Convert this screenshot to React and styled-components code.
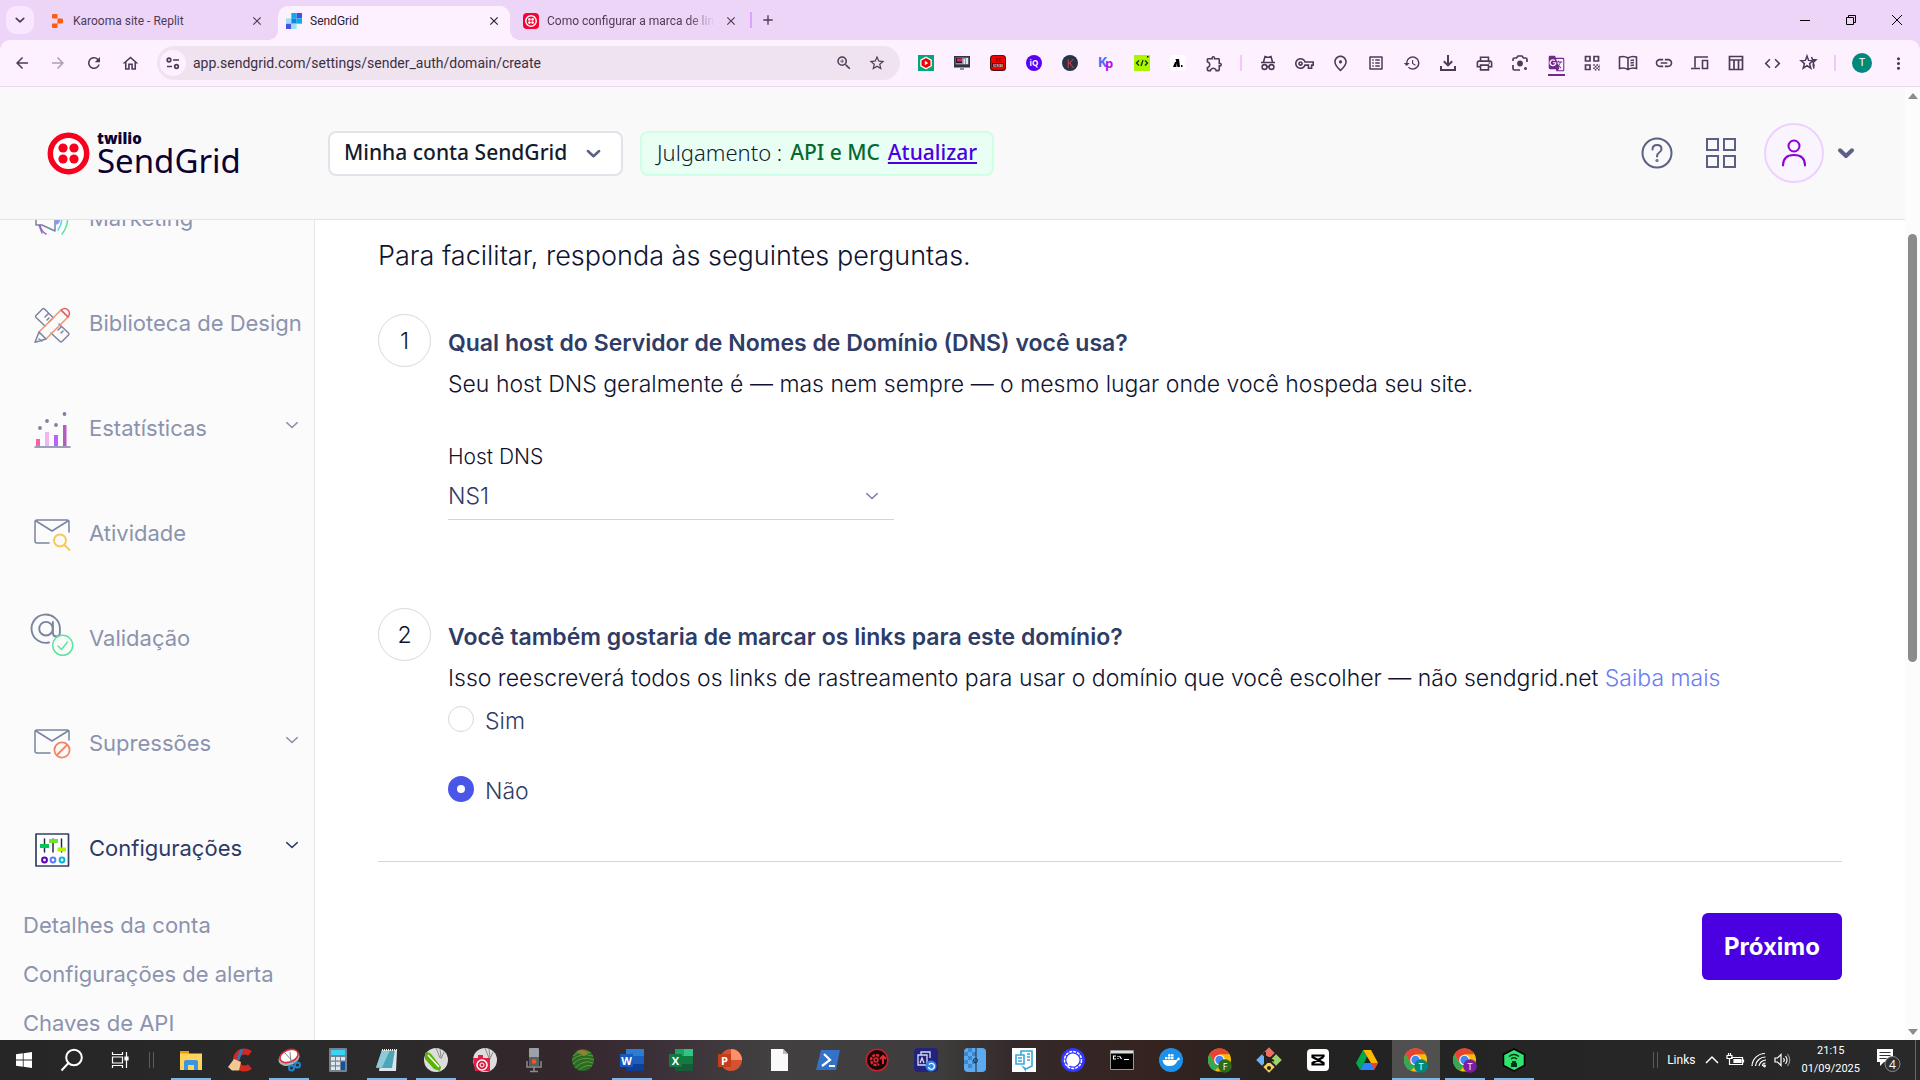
import React, { useState } from "react";
import styled, { createGlobalStyle, css } from "styled-components";
import {
  MdArrowBack, MdArrowForward, MdRefresh, MdOutlineHome, MdZoomIn, MdStarBorder,
  MdOutlineExtension, MdOutlineVpnKey, MdOutlinePlace, MdListAlt, MdHistory,
  MdOutlinePrint, MdGTranslate, MdLink, MdCode, MdMoreVert, MdClose, MdAdd,
} from "react-icons/md";

const UI = 'Roboto, "Noto Sans", sans-serif';
const BODY = 'Inter, "Liberation Sans", sans-serif';

const GlobalStyle = createGlobalStyle`
  *, *::before, *::after { box-sizing: border-box; }
  body { margin: 0; background: #fff; font-family: ${BODY}; overflow: hidden; }
  button, select, input { font: inherit; color: inherit; margin: 0; }
  button { border: 0; padding: 0; background: none; cursor: pointer; }
  svg { display: block; flex: none; overflow: visible; }
`;

const Screen = styled.div`
  height: 100vh;
  display: flex;
  flex-direction: column;
`;

/* ---------- Browser tab strip ---------- */
const TabStrip = styled.header`
  display: flex;
  align-items: flex-end;
  height: 40px;
  background: #edd5f8;
  font: 12px/16px ${UI};
  color: #4d3b57;
`;
const TabSearch = styled.button`
  display: grid;
  place-items: center;
  width: 28px;
  height: 28px;
  margin: 0 7px 6px 6px;
  border-radius: 10px;
  background: #f9e6ff;
`;
const Tabs = styled.div`
  display: flex;
  gap: 5px;
`;
const Tab = styled.div`
  position: relative;
  display: flex;
  align-items: center;
  gap: 8px;
  width: 232px;
  height: 34px;
  padding: 0 8px 5px;
  border-radius: 10px 10px 0 0;
  ${(p) => p.$active && css`
    background: #fef1ff;
    color: #2a2030;
    &::before, &::after {
      content: "";
      position: absolute;
      bottom: 0;
      width: 10px;
      height: 10px;
    }
    &::before { left: -10px; background: radial-gradient(circle at 0 0, transparent 10px, #fef1ff 10px); }
    &::after { right: -10px; background: radial-gradient(circle at 100% 0, transparent 10px, #fef1ff 10px); }
  `}
`;
const TabTitle = styled.span`
  flex: 1;
  min-width: 0;
  overflow: hidden;
  white-space: nowrap;
  ${(p) => p.$fade && css`mask-image: linear-gradient(90deg, #000 84%, transparent);`}
`;
const TabClose = styled.button`
  display: grid;
  place-items: center;
  width: 16px;
  height: 16px;
`;
const TabDivider = styled.span`
  width: 2px;
  height: 16px;
  margin: 0 8px 12px 3px;
  background: #dda2ff;
`;
const NewTab = styled(TabClose)`
  margin-bottom: 12px;
`;
const WindowControls = styled.div`
  display: flex;
  align-self: stretch;
  margin-left: auto;
`;
const WindowButton = styled.button`
  display: grid;
  place-items: center;
  width: 46px;
  color: #000;
`;

/* ---------- Browser toolbar ---------- */
const ToolbarBack = styled.div`
  background: #edd5f8;
`;
const Toolbar = styled.div`
  display: flex;
  align-items: center;
  height: 47px;
  padding: 0 4px;
  border-bottom: 1px solid #ebd6ee;
  border-radius: 10px 10px 0 0;
  background: #fef1ff;
  color: #4d3b57;
`;
const ToolButton = styled.button`
  display: grid;
  place-items: center;
  width: ${(p) => (p.$narrow ? 33 : 36)}px;
  height: 34px;
  opacity: ${(p) => (p.$muted ? 0.45 : 1)};
`;
const Omnibox = styled.div`
  display: flex;
  align-items: center;
  flex: 1;
  height: 34px;
  margin: 0 8px 0 9px;
  padding: 0 7px 0 3px;
  border-radius: 17px;
  background: #efe3f0;
`;
const SiteInfo = styled.button`
  display: grid;
  place-items: center;
  width: 26px;
  height: 26px;
  border-radius: 50%;
  background: #fef1ff;
`;
const Address = styled.input`
  flex: 1;
  min-width: 0;
  padding: 0 0 0 7px;
  border: 0;
  outline: 0;
  background: none;
  color: #3b2f42;
  font: 14px/20px ${UI};
`;
const ToolDivider = styled.span`
  width: 2px;
  height: 16px;
  margin: 0 8px;
  background: #f0c8fd;
`;
const TranslateMark = styled.span`
  display: grid;
  padding: 5px 0 2px;
  color: #71298c;
  border-bottom: 2px solid #71298c;
`;
const Profile = styled.span`
  display: grid;
  place-items: center;
  width: 20px;
  height: 20px;
  border-radius: 50%;
  background: #00897b;
  color: #fff;
  font: 11px/20px ${UI};
`;

/* ---------- Web page ---------- */
const Page = styled.div`
  flex: 1;
  min-height: 0;
  display: flex;
`;
const PageBody = styled.div`
  flex: 1;
  min-width: 0;
  display: flex;
  flex-direction: column;
`;
const AppHeader = styled.div`
  display: flex;
  align-items: center;
  height: 133px;
  padding: 0 51px 0 47px;
  border-bottom: 1px solid #e1e3ea;
  background: #f9f9f9;
  font: 21px/32px "Noto Sans", sans-serif;
`;
const Brand = styled.a`
  display: flex;
  align-items: center;
  gap: 7px;
  width: 281px;
  color: #0d0033;
  text-decoration: none;
`;
const BrandText = styled.span`
  display: grid;
`;
const BrandSmall = styled.span`
  font: 900 15px/15px "Noto Sans", sans-serif;
`;
const BrandName = styled.span`
  font: 33px/30px "Noto Sans", sans-serif;
`;
const AccountPicker = styled.label`
  display: grid;
  align-items: center;
  width: 295px;
  height: 45px;
  border: 2px solid #e1e3ea;
  border-radius: 8px;
  background: #fff;
  color: #5c5f86;
  & > * { grid-area: 1 / 1; }
  & > svg { justify-self: end; margin-right: 20px; pointer-events: none; }
`;
const AccountSelect = styled.select`
  appearance: none;
  height: 41px;
  padding: 0 14px 2px;
  border: 0;
  background: none;
  color: #121c2d;
  font-weight: 500;
`;
const PlanBadge = styled.div`
  display: flex;
  align-items: center;
  gap: 8px;
  height: 45px;
  margin-left: 17px;
  padding: 0 15px 2px;
  border: 2px solid #ccffe3;
  border-radius: 8px;
  background: #e9fff4;
  color: #121c2d;
  white-space: nowrap;
`;
const PlanStatus = styled.span`
  font-size: 22px;
  font-weight: 300;
`;
const PlanName = styled.span`
  color: #046a2f;
  font-weight: 500;
`;
const PlanLink = styled.a`
  color: #4b00e1;
  font-weight: 500;
  text-decoration: underline;
`;
const HeaderTools = styled.div`
  display: flex;
  align-items: center;
  margin-left: auto;
`;
const HeaderButton = styled.button`
  display: flex;
  align-items: center;
  gap: 14px;
  margin-left: ${(p) => p.$gap}px;
  color: #5c5f86;
`;
const UserRing = styled.span`
  display: grid;
  place-items: center;
  width: 60px;
  height: 60px;
  border: 2px solid #edd2ff;
  border-radius: 50%;
  background: #faf4ff;
  color: #8c00d6;
`;

/* ---------- Sidebar ---------- */
const Columns = styled.div`
  flex: 1;
  min-height: 0;
  display: flex;
`;
const Sidebar = styled.nav`
  width: 315px;
  flex: none;
  overflow: hidden;
  border-right: 1px solid #e6e7ec;
  background: #fbfbfb;
  font-size: 22px;
  line-height: 28px;
  font-weight: 400;
  color: #8b93ae;
`;
const NavList = styled.ul`
  margin: -53px 0 0;
  padding: 0;
  list-style: none;
`;
const NavLink = styled.a`
  display: flex;
  align-items: center;
  height: 105px;
  padding: 0 15px 0 30px;
  color: ${(p) => (p.$current ? "#2d3a66" : "inherit")};
  text-decoration: none;
  white-space: nowrap;
`;
const NavLabel = styled.span`
  flex: 1;
  min-width: 0;
  padding: 0 0 4px 15px;
`;
const NavChevron = styled.span`
  padding-bottom: 10px;
`;
const SubLink = styled.a`
  display: block;
  padding: 9px 23px 12px;
  color: inherit;
  text-decoration: none;
`;

/* ---------- Form ---------- */
const Main = styled.main`
  flex: 1;
  min-width: 0;
  padding: 20px 63px 0;
  overflow: hidden;
  background: #fff;
  color: #10132f;
  font-size: 23px;
  font-weight: 300;
`;
const Intro = styled.p`
  margin: 0 0 42px;
  font-size: 27px;
  line-height: 32px;
`;
const Step = styled.section`
  display: flex;
  gap: 17px;
  margin-bottom: ${(p) => p.$after}px;
`;
const StepNumber = styled.span`
  display: grid;
  place-items: center;
  flex: none;
  width: 53px;
  height: 53px;
  border: 1px solid #d5d9e2;
  border-radius: 50%;
`;
const StepBody = styled.div`
  padding-top: 8px;
`;
const StepTitle = styled.h2`
  margin: 0;
  color: #2f3c66;
  font-size: 23px;
  line-height: 42px;
  font-weight: 600;
`;
const StepText = styled.p`
  margin: 0;
  line-height: 41px;
`;
const MoreLink = styled.a`
  color: #6b7df2;
  text-decoration: none;
`;
const FieldLabel = styled.label`
  display: block;
  margin-top: 37px;
  font-size: 21px;
  line-height: 30px;
`;
const HostField = styled.div`
  display: grid;
  align-items: center;
  width: 446px;
  border-bottom: 1px solid #d0d5e0;
  color: #2f3c66;
  & > * { grid-area: 1 / 1; }
  & > svg { justify-self: end; margin-right: 15px; pointer-events: none; color: #7d88a8; }
`;
const HostSelect = styled.select`
  appearance: none;
  height: 47px;
  padding: 0;
  border: 0;
  background: none;
`;
const Choices = styled.div`
  display: grid;
  gap: 26px;
`;
const Choice = styled.label`
  display: flex;
  align-items: center;
  gap: 11px;
  color: #2f3c66;
  line-height: 44px;
`;
const Radio = styled.input`
  && { margin-bottom: 4px; }
  appearance: none;
  width: 26px;
  height: 26px;
  border: 1px solid #d5d9e2;
  border-radius: 50%;
  background: #fff;
  &:checked { border: 9px solid #4a56e8; }
`;
const Divider = styled.hr`
  margin: 0;
  border: 0;
  border-top: 1px solid #d3d5da;
`;
const Actions = styled.div`
  display: flex;
  justify-content: flex-end;
  padding-top: 51px;
`;
const NextButton = styled.button`
  height: 67px;
  padding: 0 22px;
  border-radius: 6px;
  background: #4b00e1;
  color: #fff;
  font-size: 24px;
  font-weight: 700;
`;
const ScrollTrack = styled.div`
  display: flex;
  flex-direction: column;
  align-items: center;
  width: 15px;
  padding: 6px 0 5px;
  background: #fcfcfc;
`;
const ScrollThumb = styled.div`
  flex: 0 0 calc(46% - 5px);
  width: 9px;
  margin: 135px 0 auto;
  border-radius: 5px;
  background: #8b8b8b;
`;

/* ---------- Taskbar ---------- */
const Taskbar = styled.footer`
  display: flex;
  height: 40px;
  background: linear-gradient(90deg, #262626 0, #2c2a2a 20%, #33272b 29%, #3a2d36 33%, #424041 40%, #3e3c3c 49%, #34292a 53%, #35231f 60%, #262322 66%, #232323 70%, #292929 100%);
  color: #fff;
  font: 12px/18px ${UI};
`;
const TaskItems = styled.div`
  display: flex;
  gap: 1px;
`;
const TaskButton = styled.button`
  display: grid;
  place-items: center;
  width: 48px;
  height: 40px;
  background:
    linear-gradient(#76b9ed, #76b9ed) bottom / ${(p) => (p.$active ? "48px" : p.$open ? "40px" : "0")} 2px no-repeat,
    ${(p) => (p.$active ? "#505050" : "transparent")};
`;
const StartItems = styled.div`
  display: flex;
`;
const TaskGrip = styled.span`
  width: 5px;
  height: 16px;
  margin: 0 ${(p) => p.$after}px 0 ${(p) => p.$before}px;
  align-self: center;
  border: solid #5c5c5c;
  border-width: 0 1px;
`;
const Tray = styled.div`
  display: flex;
  align-items: center;
  margin-left: auto;
`;
const TrayGroup = styled.div`
  display: flex;
  align-items: center;
  gap: 7px;
  margin: 0 10px;
`;
const Clock = styled.time`
  display: grid;
  text-align: center;
  font-size: 11px;
`;
const Notifications = styled.button`
  margin: 0 14px 0 16px;
`;
const DesktopEdge = styled.span`
  width: 5px;
  height: 40px;
  border-left: 1px solid #6a6a6a;
`;

/* ---------- Drawings ---------- */
const Svg = ({ w = 20, h = w, box = `0 0 ${w} ${h}`, children, ...rest }) => (
  <svg width={w} height={h} viewBox={box} fill="none" aria-hidden="true" {...rest}>{children}</svg>
);
const Chevron = ({ w = 12, sw = 2 }) => (
  <Svg w={w} h={w} box="0 0 12 12" stroke="currentColor" strokeWidth={sw} strokeLinecap="round" strokeLinejoin="round">
    <path d="M1.500 4 6 8.200 10.500 4" />
  </Svg>
);
const Glyph = ({ x = 12, y, size, fill = "#fff", weight = 700, children }) => (
  <text x={x} y={y} fontSize={size} fill={fill} fontWeight={weight} textAnchor="middle" fontFamily='"Open Sans", sans-serif'>{children}</text>
);

const ReplitIcon = () => (
  <Svg w={16} box="0 0 16 16" fill="#ff5c0a">
    <path d="M3 2.2C3 1.500 3.500 1 4.200 1H7.500C8 1 8.500 1.500 8.500 2v3.500H4C3.400 5.500 3 5 3 4.500zM8.500 5.500H12.800c.6 0 1.200.5 1.200 1.200v2.600c0 .7-.6 1.200-1.200 1.200H8.500zM3 11.500c0-.6.500-1 1-1h4.500V14c0 .6-.5 1-1 1H4.200C3.500 15 3 14.500 3 13.800z" />
  </Svg>
);
const SendGridIcon = () => (
  <Svg w={16} box="0 0 15 15">
    <path fill="#99e1f4" d="M0 5h5v5H0z" /><path fill="#00b3e3" d="M5 0h5v5H5z" />
    <path fill="#1a82e2" d="M5 5h5v5H5z" /><path fill="#4a4fe8" d="M10 0h5v5h-5zM0 10h5v5H0z" />
    <path fill="#00b2e3" d="M10 5h5v5h-5z" /><path fill="#99e1f4" d="M5 10h5v5H5z" />
  </Svg>
);
const TwilioTab = () => (
  <Svg w={16}><rect width="16" height="16" rx="4" fill="#f9002f" /><circle cx="8" cy="8" r="5.200" stroke="#fff" strokeWidth="1.500" />
    <g fill="#fff"><circle cx="6.400" cy="6.400" r="1.300" /><circle cx="9.600" cy="6.400" r="1.300" /><circle cx="6.400" cy="9.600" r="1.300" /><circle cx="9.600" cy="9.600" r="1.300" /></g></Svg>
);
const TwilioLogo = () => (
  <Svg w={43}><circle cx="21.500" cy="21.500" r="18.200" fill="#fff" stroke="#f9001f" strokeWidth="5.500" />
    <g fill="#f9001f"><circle cx="16" cy="16" r="4.600" /><circle cx="27" cy="16" r="4.600" /><circle cx="16" cy="27" r="4.600" /><circle cx="27" cy="27" r="4.600" /></g></Svg>
);

const EXTENSIONS = [
  ["Bloqueador de vídeo", <Svg w={16}><path fill="#00a67c" d="M0 0h16v16H0z" /><path fill="#fff" d="m8 1.500 5.800 3.200v6.600L8 14.500l-5.800-3.200V4.700z" /><path fill="#f10000" d="m8 3 4.500 2.500v5L8 13l-4.500-2.500v-5z" /><path fill="#fff" d="m6.800 5.800 3.400 2.200-3.400 2.200z" /></Svg>],
  ["Gravador", <Svg w={16}><path fill="#33333d" d="M0 1h16v11H0z" /><path fill="#8e92a3" d="M1.500 2.500h13v7h-13zM0 12h16v1H0zM6 13h4v2H6z" /><path fill="#1c1c24" d="M2 3h6v5H2z" /><path fill="#ff1667" d="M3 3.500h5v3H3z" /><path fill="#dfe5ee" d="M9.500 4h1.500v5H9.500zM12 3h2v6h-2z" /></Svg>],
  ["Scribe", <Svg w={16}><rect width="16" height="16" rx="3.500" fill="#411" /><rect x="1" y=".8" width="14" height="14" rx="3" fill="#f40000" /><Glyph x={8} y={6.500} size={5} fill="#7a0d0d">YT</Glyph><path fill="#4a0505" d="M2 8h12v4H2z" /><Glyph x={8} y={11.500} size={3} fill="#f3c9c9">SCRIBE</Glyph></Svg>],
  ["IQ", <Svg w={16}><circle cx="8" cy="8" r="8" fill="#5b00f5" /><Glyph x={8} y={11} size={8}>iQ</Glyph></Svg>],
  ["K", <Svg w={16}><circle cx="8" cy="8" r="8" fill="#263447" /><Glyph x={8} y={12.500} size={12} fill="#d13b35" weight={400}>K</Glyph></Svg>],
  ["Kp", <Svg w={16}><Glyph x={4.500} y={12} size={14} fill="#536bf5">K</Glyph><Glyph x={11} y={13} size={13} fill="#b311f4">p</Glyph></Svg>],
  ["Código", <Svg w={16}><path fill="#aaf500" d="M0 0h16v16H0z" /><path stroke="#173000" strokeWidth="1.300" d="M5 5.500 2.500 8 5 10.500M11 5.500 13.500 8 11 10.500M9 5l-2 6" /><path fill="#111" d="M13 1h1.500v1.500H13z" /></Svg>],
  ["Notas", <Svg w={16}><rect width="16" height="16" rx="3" fill="#fff" /><path fill="#000" d="M3 12 5 7h1.500v5zM5.500 4H9l1 8H7.500zM11 10h1.500v2H11z" /></Svg>],
  ["Extensões", <MdOutlineExtension size={19} />],
];
const IconIncognito = () => (
  <Svg w={18} stroke="currentColor" strokeWidth="1.600"><path d="M2 8.500h14M4.500 8 6 2.500l3 1 3-1L13.500 8" /><circle cx="5.500" cy="13" r="2.400" /><circle cx="12.500" cy="13" r="2.400" /><path d="M8 12.600h2" /></Svg>
);
const IconDownload = () => (
  <Svg w={18} stroke="currentColor" strokeWidth="2"><path d="M9 1v10M4.800 7.200 9 11.400l4.200-4.200M2 12v4h14v-4" /></Svg>
);
const IconLens = () => (
  <Svg w={18} stroke="currentColor" strokeWidth="1.700"><path d="M2 7V5.500Q2 4 3.500 4h2L7 2h4l1.500 2h2Q16 4 16 5.500V8M2 11v3.500Q2 16 3.500 16H9" /><circle cx="9" cy="9.500" r="2.900" fill="currentColor" stroke="none" /><circle cx="14.500" cy="14.500" r="1.500" fill="currentColor" stroke="none" /></Svg>
);
const IconQr = () => (
  <Svg w={16} stroke="currentColor" strokeWidth="1.700"><path d="M1.500 1.500h4.500V6H1.500zM10 1.500h4.500V6H10zM1.500 10h4.500v4.500H1.500z" /><path strokeWidth="1.600" strokeDasharray="1.600 1.600" d="M9.200 10H16M10.800 11.600H16M9.200 13.200H16M10.800 14.800H16" /></Svg>
);
const IconReader = () => (
  <Svg w={20} h={16} stroke="currentColor" strokeWidth="1.600"><path d="M10 3Q6 .5 1.500 2v11.500Q6 12 10 14.500 14 12 18.500 13.500V2Q14 .5 10 3zv11.500M12.500 5.500 16 5M12.500 8 16 7.500M12.500 10.500 16 10" /></Svg>
);
const IconDevices = () => (
  <Svg w={18} h={16} stroke="currentColor" strokeWidth="1.600"><path d="M17 2H4v10.500M0 13.500h9M11.500 5.500h5v8h-5z" /></Svg>
);
const IconTable = () => (
  <Svg w={16} stroke="currentColor" strokeWidth="1.700"><path d="M1.500 1.500h13v13h-13zM1.500 5h13M6 5v9.500M10.500 5v9.500" /></Svg>
);
const IconStars = () => (
  <Svg w={18} stroke="currentColor" strokeWidth="1.500"><path d="m8 2 1.600 4.400 4.400.3-3.400 2.900 1.200 4.600L8 11.600l-3.800 2.600 1.200-4.600L2 6.700l4.400-.3zM12.500 3l1 2.500 3.500.4-2.800 2.500 1 3.800M14 10l1 4.500" /></Svg>
);
const TOOLS = [
  ["Anônima", <IconIncognito />], ["Senhas", <MdOutlineVpnKey size={19} />], ["Local", <MdOutlinePlace size={19} />],
  ["Lista de leitura", <MdListAlt size={18} />], ["Histórico", <MdHistory size={18} />], ["Downloads", <IconDownload />],
  ["Imprimir", <MdOutlinePrint size={19} />], ["Lens", <IconLens />],
  ["Traduzir", <TranslateMark><MdGTranslate size={17} /></TranslateMark>],
  ["QR Code", <IconQr />], ["Modo de leitura", <IconReader />], ["Copiar link", <MdLink size={20} />],
  ["Enviar para dispositivos", <IconDevices />], ["Personalizar", <IconTable />], ["Ferramentas", <MdCode size={19} />], ["Favoritos", <IconStars />],
];

const Nav44 = ({ children }) => <Svg w={44} strokeWidth="1.500" stroke="#7a84a0" strokeLinecap="round" strokeLinejoin="round">{children}</Svg>;
const NAV = [
  ["Marketing", <Nav44><path d="M6 18v9h6l13 6V11L12 18zM9 27l3 8" /><path stroke="#9b5fd0" d="M10 27q1 6 6 9" /><path fill="#8f97f5" stroke="none" d="M25 17a5 5 0 0 1 0 10z" /><path stroke="#5fd3e8" d="M29 12q6 10-1 20" /><path stroke="#5fe3a0" d="M34 8q8 15-2 28" /></Nav44>],
  ["Biblioteca de Design", <Nav44><path d="m15 23-9-8.500q-1-1 0-2L12.500 6q1-1 2 0L23 14.500M29 21l9.500 9q1 1 0 2L32 38.500q-1 1-2 0L21 30M15 14l3-3M17 17l2-2M19 19l3-3M28 27l3-3M31 30l2-2" /><path stroke="#f5946b" d="M9 29 31 7l7 7-22 22" /><path stroke="#d9636b" d="M31 7q4-3 7 0t0 7z" /><path d="m9 29-4 10.300L16 36zM9 36l3 2" /></Nav44>],
  ["Estatísticas", <Nav44><g stroke="none"><path fill="#ff5fa2" d="M6 31h4v7H6z" /><path fill="#f0b5f2" d="M15 24h4v14h-4z" /><path fill="#b862ff" d="M24 27h4v11h-4z" /><path fill="#b45cc0" d="M33 17h3.500v21H33z" /><g fill="#7a84a0"><circle cx="10" cy="20" r="1.900" /><circle cx="17" cy="13" r="1.900" /><circle cx="26" cy="17" r="1.900" /><circle cx="34.500" cy="6" r="1.900" /></g></g><path d="M5 39h35" /></Nav44>, true],
  ["Atividade", <Nav44><path d="M19 30H7q-2 0-2-2V9q0-2 2-2h30q2 0 2 2v10M6 8l16 10L38 8" /><g stroke="#fbc55a" strokeWidth="1.900"><circle cx="30" cy="27.500" r="6" /><path d="m34.500 32 5 5" /></g></Nav44>],
  ["Validação", <Nav44><g strokeWidth="1.900"><path d="M19 24.500A14.200 14.200 0 1 1 29.900 10v4.500q0 4-3.500 4t-3.500-4V4" /><circle cx="16" cy="10.700" r="6.800" /></g><g stroke="#5fe3a0"><circle cx="32.700" cy="27.300" r="10" fill="#fbfbfb" /><path d="m28 28 3.500 3.500 6-7.500" /></g></Nav44>],
  ["Supressões", <Nav44><path d="M20 30H7q-2 0-2-2V9q0-2 2-2h30q2 0 2 2v8M6 8l16 10L38 8" /><g stroke="#f58363" strokeWidth="1.800"><circle cx="32" cy="27" r="7.600" /><path d="m27 32 10-10" /></g></Nav44>, true],
  ["Configurações", <Nav44><path stroke="#34406b" strokeWidth="1.700" fill="#fff" d="M6 6h32.500v32H6z" /><path stroke="#222a50" d="M14.500 11v13M23 11v13M31.500 11v13" /><g strokeLinecap="butt" strokeWidth="4"><path stroke="#00c853" d="M10 18h9" /><path stroke="#76e02c" d="M19 13h9" /><path stroke="#b6f000" d="M27.500 21.500H36" /></g><g strokeWidth="2"><circle cx="14.500" cy="32" r="2.400" stroke="#5b00b5" /><circle cx="23" cy="32" r="2.400" stroke="#5b7bff" /><circle cx="32" cy="32" r="2.400" stroke="#00b8d9" /></g></Nav44>, true, true],
];

const T = ({ children }) => <Svg w={24}>{children}</Svg>;
const Chrome = ({ color, letter }) => (
  <T><circle cx="11.500" cy="12" r="11.500" fill="#fbbc04" /><path fill="#ea4335" d="M1.500 6.300A11.500 11.500 0 0 1 21.500 6.300H11.500L6.500 15z" /><path fill="#34a853" d="M1.500 6.300 6.500 15l5 2.700-4.600 5A11.500 11.500 0 0 1 1.500 6.300z" /><circle cx="11.500" cy="12" r="5.300" fill="#fff" /><circle cx="11.500" cy="12" r="4.200" fill="#4285f4" /><circle cx="17" cy="18" r="6.800" fill={color} /><Glyph x={17} y={21.500} size={9} weight={400}>{letter}</Glyph></T>
);
const START = [
  ["Iniciar", <Svg w={16}><path fill="#fff" d="M0 2.200 6.800 1.300v6.300H0zM7.600 1.200 16 0v7.600H7.600zM0 8.400h6.800v6.300L0 13.800zM7.600 8.400H16V16l-8.400-1.200z" /></Svg>],
  ["Pesquisar", <Svg w={24} stroke="#fff" strokeWidth="2"><circle cx="14" cy="9.500" r="7.800" /><path d="M8.500 15 1.500 22.500" /></Svg>],
  ["Visão de tarefas", <Svg w={18} stroke="#fff" strokeWidth="1.200"><path d="M1.500 1v2.500h10V1M1.500 6h10v6h-10zM1.500 17v-2.500h10V17M15.500 1v16" /><path fill="#fff" d="M14 6h3v3h-3z" /></Svg>],
];
const TASKS = [
  ["Explorador", <T><path fill="#e6a100" d="M1 3h9v5H1z" /><path fill="#ffd35c" d="M1 5.500h22V22H1z" /><path fill="#3d94e0" d="M5 22v-8q0-2 2-2h10q2 0 2 2v8h-4v-5H9v5z" /></T>, 1],
  ["CCleaner", <T><path stroke="#d02b20" strokeWidth="6" d="M22 5.500A8.500 8.500 0 1 0 22 18.500" /><path stroke="#267ac8" strokeWidth="3" d="M13.500 1.500 10 12" /><path fill="#f0c896" d="m6 11 7 3-2 8.500H4L0 19z" /></T>],
  ["Captura", <T><ellipse cx="12" cy="10" rx="11" ry="7.500" fill="#a9b3ba" transform="rotate(-22 12 10)" /><ellipse cx="12" cy="8" rx="9.500" ry="6" fill="#fff" stroke="#dd2c35" strokeWidth="1.600" transform="rotate(-22 12 8)" /><path stroke="#7d878d" d="m8 5 9 10M13 4l1 11" /><g stroke="#1c86d1" strokeWidth="2"><circle cx="14.500" cy="20" r="2.500" /><circle cx="20.500" cy="17" r="2.500" /></g></T>, 1],
  ["Calculadora", <T><rect x="3" width="18" height="24" rx="1" fill="#758391" /><path fill="#3ad3f8" d="M5 2h14v5H5z" /><path fill="#dfe6ec" d="M5 9h4v3.500H5zM10 9h4v3.500h-4zM15 9h4v3.500h-4zM5 13.700h4v3.500H5zM10 13.700h4v3.500h-4zM5 18.500h4V22H5zM10 18.500h4V22h-4z" /><path fill="#14509e" d="M15 13.700h4V22h-4z" /></T>],
  ["Bloco de notas", <T><path fill="#dae6eb" d="M7 2h15l-1 21H4z" /><path fill="#4ba6b9" d="M7 2h13l-3 18H1z" /><path fill="#8fcbd6" d="M7 2h8L7 19.500H1z" /><path stroke="#eee" strokeDasharray="1 1" strokeWidth="2" d="M7 2h15" /></T>, 1],
  ["CorelDRAW", <T><circle cx="12" cy="12" r="12" fill="#ddd" /><path stroke="#8d8d8d" d="m12 0 4 10M16 1l1 9M20 4l-3 7" /><path fill="#58b400" d="M1 5q4-2 7 2l9 12-1 4-6-2L1 11z" /><path stroke="#fff" strokeWidth="1.500" d="m4 7 11 12" /></T>, 1],
  ["Photo-Paint", <T><circle cx="12" cy="12" r="12" fill="#ddd" /><path stroke="#8d8d8d" d="m12 0 4 10M16 1l1 9M20 4l-3 7" /><path fill="#de1f46" d="M0 10h5V7h5v3h7v13H2z" /><circle cx="9" cy="17" r="5" fill="#de1f46" stroke="#fff" strokeWidth="1.500" /><circle cx="9" cy="17" r="2" stroke="#fff" /></T>],
  ["Gravador de voz", <T><rect x="7" y="0" width="10" height="18" rx="1" fill="#9aa1a8" /><path fill="#5b6064" d="M7 9h10v9H7z" /><circle cx="12" cy="13.500" r="2.200" fill="#f0581d" /><path stroke="#888d91" strokeWidth="1.500" d="M5 13v6h14v-6M12 19v4M8 23.500h8" /></T>],
  ["Globo", <T><circle cx="12" cy="12" r="11" fill="#2b6a25" /><path fill="#a5762e" d="M5 4q7-5 13 1l-5 3z" /><path stroke="#5f9c3c" d="M2 8q8-7 18-3M1 12q9-8 21-4M2 16q9-9 21-4M4 20q9-9 18-5M8 22q7-6 13-4" /></T>],
  ["Word", <T><path fill="#2b7cd3" d="M6 1h18v7H6z" /><path fill="#1b5ebe" d="M6 8h18v8H6z" /><path fill="#103f91" d="M6 16h18v7H6z" /><path fill="#185abd" d="M0 6h13v13H0z" /><Glyph x={6.500} y={16.500} size={11}>W</Glyph></T>, 1],
  ["Excel", <T><path fill="#21a366" d="M6 1h18v7H6z" /><path fill="#107c41" d="M6 8h18v8H6z" /><path fill="#185c37" d="M6 16h18v7H6z" /><path fill="#33c481" d="M15 1h9v7h-9z" /><path fill="#107c41" d="M0 6h13v13H0z" /><Glyph x={6.500} y={16.500} size={11}>X</Glyph></T>],
  ["PowerPoint", <T><circle cx="13" cy="12" r="11" fill="#d35230" /><path fill="#ff8f6b" d="M13 1a11 11 0 0 1 11 11H13z" /><path fill="#c43e1c" d="M0 6h13v13H0z" /><Glyph x={6.500} y={16.500} size={11}>P</Glyph></T>],
  ["Documento", <T><path fill="#fafafa" d="M4 1h12l5 5v17H4z" /><path fill="#bbb" d="M16 1v5h5z" /></T>],
  ["PowerShell", <T><path fill="#3471c9" d="M5 2h19l-4 20H0z" /><path stroke="#fff" strokeWidth="2.200" d="m8 6 6 6-8 6M13 18h6" /></T>],
  ["Atualizador", <T><circle cx="12" cy="12" r="10.800" fill="#180507" stroke="#c2232b" strokeWidth="1.500" /><path stroke="#e32a30" strokeWidth="2.400" strokeDasharray="3 1" d="M14 8a5 5 0 1 0 0 8" /><circle cx="11" cy="12" r="2" stroke="#e32a30" strokeWidth="1.500" /><path stroke="#e32a30" strokeWidth="2" d="M18 16V8m-3 3 3-3 3 3" /></T>],
  ["Backup", <T><rect width="24" height="24" rx="4" fill="#22237d" /><path stroke="#d9dcf7" strokeWidth="1.300" d="M4 7h9v10H4zM7 7V4h9v6M6 15l2-5 2 5" /><circle cx="17" cy="18" r="5.500" fill="#3383e0" /><path stroke="#fff" strokeWidth="1.300" d="M15 16.500a3 3 0 1 1-.5 2.500" /></T>],
  ["Compactador", <T><rect x="1" width="22" height="24" rx="4" fill="#5caaf0" /><path fill="#3f86cc" d="M1 4h4v4H1zM9 4h4v4H9zM5 8h4v4H5zM1 12h4v4H1zM9 12h4v4H9zM5 16h4v4H5zM5 0h4v4H5z" /><path stroke="#1e2b38" d="M13 0v24" /><circle cx="12.500" cy="12.500" r="2" stroke="#1e2b38" /></T>],
  ["Leitor", <T><path fill="#fff" d="M0 0h24v24H0z" /><g stroke="#36a9d8" strokeWidth="1.600"><path d="M4 7h8v9H4zM9 7V3h11v15l-6 3M15 6h3M15 9h3M15 12h3M6 10h4M6 13h4" /></g><path fill="#36a9d8" d="m9 17 5 3v4z" /></T>],
  ["Signal", <T><circle cx="12" cy="12" r="12" fill="#3337ff" /><circle cx="12" cy="12" r="8.500" stroke="#fff" strokeWidth="1.500" strokeDasharray="3 1" /><path fill="#fff" d="M12 5.500a6.500 6.500 0 1 1-3 12.300L6 19l.7-3.200A6.500 6.500 0 0 1 12 5.500z" /></T>],
  ["Prompt", <T><path fill="#000" stroke="#999" d="M.5 2.500h23v19H.5z" /><path fill="#ddd" d="M1 3h22v2.500H1z" /><path stroke="#fff" strokeWidth="1.200" d="M6 8H3.500v3H6M8 8v1M8 10v1M9.500 8l2 3M14 11.500h5" /></T>],
  ["Docker", <T><circle cx="12" cy="12" r="12" fill="#1d91ea" /><path fill="#fff" d="M3.500 12h14q1-3 2.500-2.500L21 11q-1 1.500-2.500 1.500-2 5.500-8 5.500-6 .3-7-6zM6 9h2.500v2.300H6zM9 9h2.500v2.300H9zM12 9h2.500v2.300H12zM9 6.300h2.500v2.200H9zM12 6.300h2.500v2.200H12z" /></T>],
  ["Chrome F", <Chrome color="#2a6b1c" letter="F" />, 1],
  ["Git", <T><g transform="rotate(45 12 12)"><path fill="#f06d60" d="M3 3h8v8H3z" /><path fill="#9cd46b" d="M13 3h8v8h-8z" /><path fill="#72b0f5" d="M3 13h8v8H3z" /><path fill="#f6cf58" d="M13 13h8v8h-8z" /></g><path stroke="#222" strokeWidth="2" d="M8 4v13M8 8l9 5" /><g fill="#222"><circle cx="12" cy="12" r="3" /><circle cx="12" cy="20" r="2" /></g></T>],
  ["CapCut", <T><rect x="1" y="1" width="22" height="22" rx="4" fill="#fff" /><path stroke="#000" strokeWidth="2.200" d="M17.500 9V7.500h-11V9l11 6v1.500h-11V15l11-6" /></T>],
  ["Drive", <T><path fill="#00ac47" d="M8 2 1 15l4 7L12 9z" /><path fill="#ffba00" d="M8 2h8l7 13h-7z" /><path fill="#2684fc" d="M8.500 15H23l-4 7H5z" /><path fill="#ea4335" d="M16 15h7l-4 7z" /></T>],
  ["Chrome T", <Chrome color="#00897b" letter="T" />, 1, 1],
  ["Chrome T 2", <Chrome color="#7b1fa2" letter="T" />, 1],
  ["VPN", <T><path fill="#2fe36f" stroke="#000" strokeWidth="1.500" d="m12 1 10.500 5.500v11L12 23 1.500 17.500v-11z" /><g stroke="#06351b" strokeWidth="1.500"><path d="M7 8.500q5-4 10 0M9 11q3-2.500 6 0" /></g><path fill="#06351b" d="M10 13h4v2h1v4H9v-4h1z" /></T>, 1],
];

export default function App() {
  const [brandLinks, setBrandLinks] = useState("nao");
  return (
    <Screen>
      <GlobalStyle />
      <TabStrip>
        <TabSearch aria-label="Pesquisar guias"><Chevron w={10} /></TabSearch>
        <Tabs>
          <Tab><ReplitIcon /><TabTitle>Karooma site - Replit</TabTitle><TabClose aria-label="Fechar"><MdClose size={14} /></TabClose></Tab>
          <Tab $active><SendGridIcon /><TabTitle>SendGrid</TabTitle><TabClose aria-label="Fechar"><MdClose size={14} /></TabClose></Tab>
          <Tab><TwilioTab /><TabTitle $fade>Como configurar a marca de lin</TabTitle><TabClose aria-label="Fechar"><MdClose size={14} /></TabClose></Tab>
        </Tabs>
        <TabDivider />
        <NewTab aria-label="Nova guia"><MdAdd size={16} /></NewTab>
        <WindowControls>
          <WindowButton aria-label="Minimizar"><Svg w={10} stroke="currentColor"><path d="M0 5.500h10" /></Svg></WindowButton>
          <WindowButton aria-label="Restaurar"><Svg w={10} stroke="currentColor"><path d="M.5 2.500h7v7h-7zM2.500 2.500v-2h7v7h-2" /></Svg></WindowButton>
          <WindowButton aria-label="Fechar janela"><Svg w={10} stroke="currentColor"><path d="m0 0 10 10M10 0 0 10" /></Svg></WindowButton>
        </WindowControls>
      </TabStrip>
      <ToolbarBack>
        <Toolbar>
          <ToolButton aria-label="Voltar"><MdArrowBack size={18} /></ToolButton>
          <ToolButton aria-label="Avançar" $muted><MdArrowForward size={18} /></ToolButton>
          <ToolButton aria-label="Recarregar"><MdRefresh size={18} /></ToolButton>
          <ToolButton aria-label="Início"><MdOutlineHome size={19} /></ToolButton>
          <Omnibox>
            <SiteInfo aria-label="Informações do site">
              <Svg w={14} stroke="currentColor" strokeWidth="1.700"><circle cx="3" cy="4" r="1.800" /><path d="M7 4h6M1 10.500h5" /><circle cx="10.500" cy="10.500" r="1.800" /></Svg>
            </SiteInfo>
            <Address aria-label="Endereço" defaultValue="app.sendgrid.com/settings/sender_auth/domain/create" />
            <ToolButton aria-label="Zoom" $narrow><MdZoomIn size={18} /></ToolButton>
            <ToolButton aria-label="Favoritar" $narrow><MdStarBorder size={18} /></ToolButton>
          </Omnibox>
          {EXTENSIONS.map(([name, icon]) => <ToolButton key={name} aria-label={name}>{icon}</ToolButton>)}
          <ToolDivider />
          {TOOLS.map(([name, icon]) => <ToolButton key={name} aria-label={name}>{icon}</ToolButton>)}
          <ToolDivider />
          <ToolButton aria-label="Perfil"><Profile>T</Profile></ToolButton>
          <ToolButton aria-label="Menu"><MdMoreVert size={19} /></ToolButton>
        </Toolbar>
      </ToolbarBack>

      <Page>
        <PageBody>
          <AppHeader>
            <Brand href="#"><TwilioLogo /><BrandText><BrandSmall>twilio</BrandSmall><BrandName>SendGrid</BrandName></BrandText></Brand>
            <AccountPicker>
              <AccountSelect aria-label="Conta" defaultValue="sg"><option value="sg">Minha conta SendGrid</option></AccountSelect>
              <Chevron w={15} sw={2} />
            </AccountPicker>
            <PlanBadge><PlanStatus>Julgamento :</PlanStatus><PlanName>API e MC</PlanName><PlanLink href="#">Atualizar</PlanLink></PlanBadge>
            <HeaderTools>
              <HeaderButton aria-label="Ajuda" $gap={0}>
                <Svg w={32} stroke="currentColor" strokeWidth="2"><circle cx="16" cy="16" r="14.500" /><path strokeLinecap="round" d="M11.500 12.500q0-4.500 4.500-4.500t4.500 4q0 2-2.300 3.500T16 19.500" /><circle cx="16" cy="23.500" r=".6" /></Svg>
              </HeaderButton>
              <HeaderButton aria-label="Aplicativos" $gap={32}>
                <Svg w={32} stroke="currentColor" strokeWidth="2"><path d="M2 2h11v11H2zM19 2h11v11H19zM2 19h11v11H2zM19 19h11v11H19z" /></Svg>
              </HeaderButton>
              <HeaderButton aria-label="Minha conta" $gap={27}>
                <UserRing><Svg w={28} stroke="currentColor" strokeWidth="2" strokeLinecap="round"><circle cx="14" cy="7" r="5.500" /><path d="M3 26.500q0-10.500 11-10.500t11 10.500" /></Svg></UserRing>
                <Chevron w={16} sw={3} />
              </HeaderButton>
            </HeaderTools>
          </AppHeader>
          <Columns>
            <Sidebar>
              <NavList>
                {NAV.map(([label, icon, expandable, current]) => (
                  <li key={label}>
                    <NavLink href="#" $current={current}>
                      {icon}<NavLabel>{label}</NavLabel>
                      {expandable && <NavChevron><Chevron w={14} sw={1.300} /></NavChevron>}
                    </NavLink>
                  </li>
                ))}
                {["Detalhes da conta", "Configurações de alerta", "Chaves de API"].map((label) => (
                  <li key={label}><SubLink href="#">{label}</SubLink></li>
                ))}
              </NavList>
            </Sidebar>
            <Main>
              <Intro>Para facilitar, responda às seguintes perguntas.</Intro>
              <Step $after={88}>
                <StepNumber>1</StepNumber>
                <StepBody>
                  <StepTitle>Qual host do Servidor de Nomes de Domínio (DNS) você usa?</StepTitle>
                  <StepText>Seu host DNS geralmente é — mas nem sempre — o mesmo lugar onde você hospeda seu site.</StepText>
                  <FieldLabel htmlFor="dns-host">Host DNS</FieldLabel>
                  <HostField>
                    <HostSelect id="dns-host" defaultValue="NS1"><option>NS1</option></HostSelect>
                    <Chevron w={14} sw={1.300} />
                  </HostField>
                </StepBody>
              </Step>
              <Step $after={48}>
                <StepNumber>2</StepNumber>
                <StepBody>
                  <StepTitle>Você também gostaria de marcar os links para este domínio?</StepTitle>
                  <StepText>Isso reescreverá todos os links de rastreamento para usar o domínio que você escolher — não sendgrid.net <MoreLink href="#">Saiba mais</MoreLink></StepText>
                  <Choices>
                    <Choice><Radio type="radio" name="brand" checked={brandLinks === "sim"} onChange={() => setBrandLinks("sim")} />Sim</Choice>
                    <Choice><Radio type="radio" name="brand" checked={brandLinks === "nao"} onChange={() => setBrandLinks("nao")} />Não</Choice>
                  </Choices>
                </StepBody>
              </Step>
              <Divider />
              <Actions><NextButton>Próximo</NextButton></Actions>
            </Main>
          </Columns>
        </PageBody>
        <ScrollTrack>
          <Svg w={10} h={6}><path fill="#8b8b8b" d="M0 6 5 0l5 6z" /></Svg>
          <ScrollThumb />
          <Svg w={10} h={6}><path fill="#8b8b8b" d="M0 0h10L5 6z" /></Svg>
        </ScrollTrack>
      </Page>

      <Taskbar>
        <StartItems>{START.map(([name, icon]) => <TaskButton key={name} aria-label={name}>{icon}</TaskButton>)}</StartItems>
        <TaskGrip $before={5} $after={13} />
        <TaskItems>{TASKS.map(([name, icon, open, active]) => <TaskButton key={name} aria-label={name} $open={open} $active={active}>{icon}</TaskButton>)}</TaskItems>
        <Tray>
          <TaskGrip $before={0} $after={9} />
          <span>Links</span>
          <TrayGroup>
            <Svg w={14} stroke="#fff" strokeWidth="1.500"><path d="m1 10 6-6 6 6" /></Svg>
            <Svg w={18} h={16} stroke="#fff" strokeWidth="1.200"><path d="M5 5.500h11.500v7H5M17.500 7.500v3M1 3.500h5v3H1zM2.500 3.500V1M4.500 3.500V1M3.500 6.500v6H5" /><path fill="#fff" d="M8 7.500h7v3H8z" /></Svg>
            <Svg w={16} stroke="#fff" strokeWidth="1.200"><path d="M1 14A13 13 0 0 1 14 1.500M4.500 14A10 10 0 0 1 14.500 5M8 14a7 7 0 0 1 7-6M11.500 14q0-3 3-3" /><circle cx="13.500" cy="14" r=".8" /></Svg>
            <Svg w={17} h={16} stroke="#fff" strokeWidth="1.200"><path d="M1 6h2.500L7 2.500v11L3.500 10H1zM9.500 6q1.500 2 0 4M11.500 4q3 4 0 8" /><path opacity=".5" d="M13.500 2q4.500 6 0 12" /></Svg>
          </TrayGroup>
          <Clock dateTime="2025-09-01T21:15"><span>21:15</span><span>01/09/2025</span></Clock>
          <Notifications aria-label="Notificações">
            <Svg w={25} h={26}><path fill="#fff" d="M1 2h16v13H8l-4 4v-4H1z" /><path stroke="#333" strokeWidth="1.200" d="M3.500 5.500h11M3.500 8.500h11M3.500 11.500h7" /><circle cx="16.500" cy="17" r="7.500" fill="#303030" stroke="#8c8c8c" /><Glyph x={16.500} y={21.500} size={12} weight={400}>4</Glyph></Svg>
          </Notifications>
          <DesktopEdge />
        </Tray>
      </Taskbar>
    </Screen>
  );
}
